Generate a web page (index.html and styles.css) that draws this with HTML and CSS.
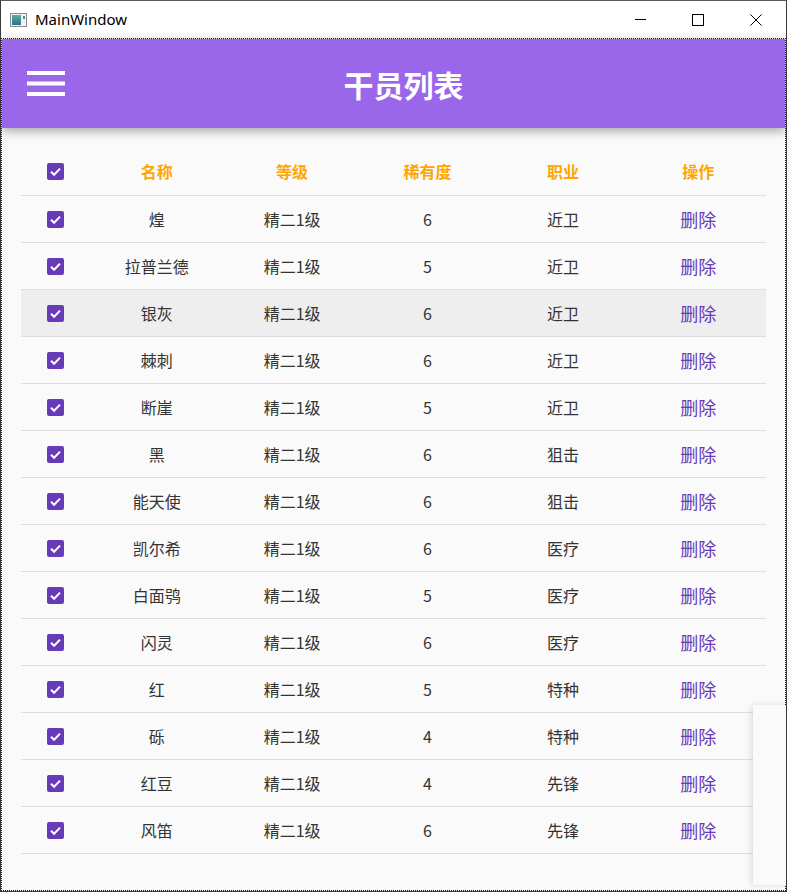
FILE: index.html
```html
<!DOCTYPE html>
<html lang="zh">
<head>
<meta charset="utf-8">
<title>MainWindow</title>
<link rel="stylesheet" href="styles.css">
</head>
<body>
<div class="window">
  <div class="titlebar">
    <svg class="app-icon" width="17" height="14" viewBox="0 0 17 14">
      <rect x="0.5" y="0.5" width="16" height="13" fill="#f2f2f2" stroke="#8a8a8a"/>
      <defs><linearGradient id="g" x1="0" y1="0" x2="0" y2="1"><stop offset="0" stop-color="#5fae9a"/><stop offset="1" stop-color="#2d6f8c"/></linearGradient></defs>
      <rect x="2" y="2" width="9" height="10" fill="url(#g)"/>
      <rect x="13" y="3" width="2" height="3" fill="#4a8fb0"/>
    </svg>
    <span class="win-title">MainWindow</span>
    <div class="controls">
      <svg class="ctl ctl-min" width="12" height="12" viewBox="0 0 12 12"><line x1="0" y1="6.5" x2="11" y2="6.5" stroke="#000" stroke-width="1"/></svg>
      <svg class="ctl ctl-max" width="12" height="12" viewBox="0 0 12 12"><rect x="0.5" y="0.5" width="11" height="11" fill="none" stroke="#000" stroke-width="1"/></svg>
      <svg class="ctl ctl-close" width="12" height="12" viewBox="0 0 12 12"><path d="M0.5 0.5 L11.5 11.5 M11.5 0.5 L0.5 11.5" stroke="#000" stroke-width="1"/></svg>
    </div>
  </div>
  <div class="content">
    <header class="appbar">
      <svg class="menu" width="38" height="25" viewBox="0 0 38 25"><rect x="0" y="0" width="38" height="4" fill="#fff"/><rect x="0" y="10.5" width="38" height="4" fill="#fff"/><rect x="0" y="21" width="38" height="4" fill="#fff"/></svg>
      <h1 class="page-title">干员列表</h1>
    </header>

    <div class="table">
      <div class="row head">
        <div class="cell"><svg class="cb" width="17" height="17" viewBox="0 0 17 17"><rect width="17" height="17" rx="2" fill="#673ab7"/><path d="M4 8.8 L7.1 11.8 L13 5.6" fill="none" stroke="#fff" stroke-width="2"/></svg></div>
        <div class="cell">名称</div><div class="cell">等级</div><div class="cell">稀有度</div><div class="cell">职业</div><div class="cell">操作</div>
      </div>
      <div class="row"><div class="cell"><svg class="cb" width="17" height="17" viewBox="0 0 17 17"><rect width="17" height="17" rx="2" fill="#673ab7"/><path d="M4 8.8 L7.1 11.8 L13 5.6" fill="none" stroke="#fff" stroke-width="2"/></svg></div><div class="cell">煌</div><div class="cell">精二1级</div><div class="cell">6</div><div class="cell">近卫</div><div class="cell del">删除</div></div>
      <div class="row"><div class="cell"><svg class="cb" width="17" height="17" viewBox="0 0 17 17"><rect width="17" height="17" rx="2" fill="#673ab7"/><path d="M4 8.8 L7.1 11.8 L13 5.6" fill="none" stroke="#fff" stroke-width="2"/></svg></div><div class="cell">拉普兰德</div><div class="cell">精二1级</div><div class="cell">5</div><div class="cell">近卫</div><div class="cell del">删除</div></div>
      <div class="row hover"><div class="cell"><svg class="cb" width="17" height="17" viewBox="0 0 17 17"><rect width="17" height="17" rx="2" fill="#673ab7"/><path d="M4 8.8 L7.1 11.8 L13 5.6" fill="none" stroke="#fff" stroke-width="2"/></svg></div><div class="cell">银灰</div><div class="cell">精二1级</div><div class="cell">6</div><div class="cell">近卫</div><div class="cell del">删除</div></div>
      <div class="row"><div class="cell"><svg class="cb" width="17" height="17" viewBox="0 0 17 17"><rect width="17" height="17" rx="2" fill="#673ab7"/><path d="M4 8.8 L7.1 11.8 L13 5.6" fill="none" stroke="#fff" stroke-width="2"/></svg></div><div class="cell">棘刺</div><div class="cell">精二1级</div><div class="cell">6</div><div class="cell">近卫</div><div class="cell del">删除</div></div>
      <div class="row"><div class="cell"><svg class="cb" width="17" height="17" viewBox="0 0 17 17"><rect width="17" height="17" rx="2" fill="#673ab7"/><path d="M4 8.8 L7.1 11.8 L13 5.6" fill="none" stroke="#fff" stroke-width="2"/></svg></div><div class="cell">断崖</div><div class="cell">精二1级</div><div class="cell">5</div><div class="cell">近卫</div><div class="cell del">删除</div></div>
      <div class="row"><div class="cell"><svg class="cb" width="17" height="17" viewBox="0 0 17 17"><rect width="17" height="17" rx="2" fill="#673ab7"/><path d="M4 8.8 L7.1 11.8 L13 5.6" fill="none" stroke="#fff" stroke-width="2"/></svg></div><div class="cell">黑</div><div class="cell">精二1级</div><div class="cell">6</div><div class="cell">狙击</div><div class="cell del">删除</div></div>
      <div class="row"><div class="cell"><svg class="cb" width="17" height="17" viewBox="0 0 17 17"><rect width="17" height="17" rx="2" fill="#673ab7"/><path d="M4 8.8 L7.1 11.8 L13 5.6" fill="none" stroke="#fff" stroke-width="2"/></svg></div><div class="cell">能天使</div><div class="cell">精二1级</div><div class="cell">6</div><div class="cell">狙击</div><div class="cell del">删除</div></div>
      <div class="row"><div class="cell"><svg class="cb" width="17" height="17" viewBox="0 0 17 17"><rect width="17" height="17" rx="2" fill="#673ab7"/><path d="M4 8.8 L7.1 11.8 L13 5.6" fill="none" stroke="#fff" stroke-width="2"/></svg></div><div class="cell">凯尔希</div><div class="cell">精二1级</div><div class="cell">6</div><div class="cell">医疗</div><div class="cell del">删除</div></div>
      <div class="row"><div class="cell"><svg class="cb" width="17" height="17" viewBox="0 0 17 17"><rect width="17" height="17" rx="2" fill="#673ab7"/><path d="M4 8.8 L7.1 11.8 L13 5.6" fill="none" stroke="#fff" stroke-width="2"/></svg></div><div class="cell">白面鸮</div><div class="cell">精二1级</div><div class="cell">5</div><div class="cell">医疗</div><div class="cell del">删除</div></div>
      <div class="row"><div class="cell"><svg class="cb" width="17" height="17" viewBox="0 0 17 17"><rect width="17" height="17" rx="2" fill="#673ab7"/><path d="M4 8.8 L7.1 11.8 L13 5.6" fill="none" stroke="#fff" stroke-width="2"/></svg></div><div class="cell">闪灵</div><div class="cell">精二1级</div><div class="cell">6</div><div class="cell">医疗</div><div class="cell del">删除</div></div>
      <div class="row"><div class="cell"><svg class="cb" width="17" height="17" viewBox="0 0 17 17"><rect width="17" height="17" rx="2" fill="#673ab7"/><path d="M4 8.8 L7.1 11.8 L13 5.6" fill="none" stroke="#fff" stroke-width="2"/></svg></div><div class="cell">红</div><div class="cell">精二1级</div><div class="cell">5</div><div class="cell">特种</div><div class="cell del">删除</div></div>
      <div class="row"><div class="cell"><svg class="cb" width="17" height="17" viewBox="0 0 17 17"><rect width="17" height="17" rx="2" fill="#673ab7"/><path d="M4 8.8 L7.1 11.8 L13 5.6" fill="none" stroke="#fff" stroke-width="2"/></svg></div><div class="cell">砾</div><div class="cell">精二1级</div><div class="cell">4</div><div class="cell">特种</div><div class="cell del">删除</div></div>
      <div class="row"><div class="cell"><svg class="cb" width="17" height="17" viewBox="0 0 17 17"><rect width="17" height="17" rx="2" fill="#673ab7"/><path d="M4 8.8 L7.1 11.8 L13 5.6" fill="none" stroke="#fff" stroke-width="2"/></svg></div><div class="cell">红豆</div><div class="cell">精二1级</div><div class="cell">4</div><div class="cell">先锋</div><div class="cell del">删除</div></div>
      <div class="row"><div class="cell"><svg class="cb" width="17" height="17" viewBox="0 0 17 17"><rect width="17" height="17" rx="2" fill="#673ab7"/><path d="M4 8.8 L7.1 11.8 L13 5.6" fill="none" stroke="#fff" stroke-width="2"/></svg></div><div class="cell">风笛</div><div class="cell">精二1级</div><div class="cell">6</div><div class="cell">先锋</div><div class="cell del">删除</div></div>
    </div>

    <div class="side-panel"></div>
  </div>
</div>
</body>
</html>
```
FILE: styles.css
```css
* { box-sizing: border-box; }
html, body { margin: 0; padding: 0; background: #fff; }
body { font-family: "Noto Sans CJK SC", "Noto Sans", sans-serif; }

.window {
  width: 787px;
  height: 892px;
  border: 1px solid #3a3a3a;
  border-top-color: #5a5a5a;
  display: flex;
  flex-direction: column;
  overflow: hidden;
}

.titlebar {
  height: 37px;
  flex: none;
  background: #fff;
  display: flex;
  align-items: center;
  padding-left: 9px;
  position: relative;
}
.app-icon { flex: none; margin-top: 0; }
.win-title {
  font-family: "Noto Sans", "Open Sans", sans-serif;
  font-size: 15px;
  color: #000;
  margin-left: 8px;
  line-height: 1;
  margin-top: -1px;
}
.controls {
  margin-left: auto;
  display: flex;
  align-items: center;
  height: 100%;
}
.ctl { display: block; }
.ctl-min { margin-right: 45px; margin-top: -1px; }
.ctl-max { margin-right: 46px; }
.ctl-close { margin-right: 24px; }

.content {
  flex: 1;
  border: 1px dotted #1a1a1a;
  background: #fafafa;
  position: relative;
}

.appbar {
  height: 89px;
  background: #9a67ea;
  display: flex;
  align-items: center;
  padding-left: 25px;
  box-shadow: 0 3px 10px rgba(0, 0, 0, 0.35);
  position: relative;
  z-index: 1;
}
.menu { flex: none; display: block; margin-top: -1px; }
.page-title {
  margin: 0;
  flex: 1;
  text-align: center;
  color: #fff;
  font-size: 30px;
  font-weight: 700;
  line-height: 1;
  margin-left: -43px;
  margin-top: 1px;
}

.table {
  width: 745px;
  margin: 20px 0 0 19px;
}
.row {
  display: grid;
  grid-template-columns: 68px repeat(5, 1fr);
  height: 47px;
  border-bottom: 1px solid #dedede;
  align-items: center;
  font-size: 16px;
  color: #333;
}
.row.head {
  height: 48px;
  color: #ffa500;
  font-weight: 700;
  padding-bottom: 1px;
}
.row.hover { background: #eeeeee; }
.cell {
  text-align: center;
  line-height: 1;
  display: flex;
  justify-content: center;
  align-items: center;
}
.cb { display: block; }
.del {
  color: #673ab7;
  font-size: 18px;
}

.side-panel {
  position: absolute;
  left: 751px;
  top: 666px;
  width: 40px;
  height: 180px;
  background: #fafafa;
  box-shadow: -2px 0 6px rgba(0, 0, 0, 0.12);
}
```
